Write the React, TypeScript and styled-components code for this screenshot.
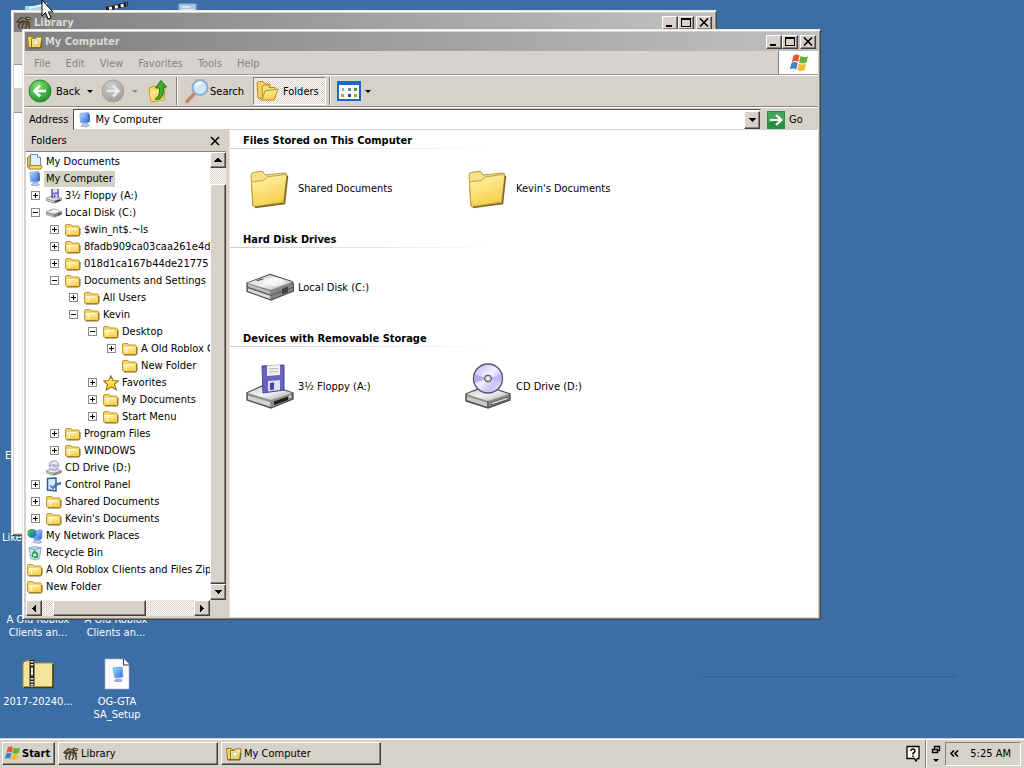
import React from "react";
import styled, { createGlobalStyle, css } from "styled-components";

const face = "#d6d1c9";
const font = '"DejaVu Sans Condensed", "DejaVu Sans", sans-serif';

const GlobalStyle = createGlobalStyle`
  * { box-sizing: border-box; }
  html, body, #root { height: 100%; }
  body {
    margin: 0;
    overflow: hidden;
    background: #3b6ea5;
    color: #000;
    font-family: ${font};
    font-size: 11px;
    line-height: 13px;
  }
  button, input { font: inherit; color: inherit; margin: 0; padding: 0; border: 0; background: none; border-radius: 0; }
  ul, h1, h2 { margin: 0; padding: 0; list-style: none; font-size: inherit; }
  svg { display: block; flex: none; }
`;

const raised = css`
  border: 1px solid;
  border-color: #fff #404040 #404040 #fff;
  box-shadow: inset -1px -1px 0 #85827b;
  background: ${face};
`;

const dither = css`
  background: repeating-conic-gradient(#fff 0 25%, #d6d1c9 0 50%) 0 0 / 2px 2px;
`;

/* ---------- desktop ---------- */

const Screen = styled.div`
  display: flex;
  flex-direction: column;
  height: 100%;
`;

const Desktop = styled.main`
  position: relative;
  flex: 1;
  min-height: 0;
  overflow: hidden;
  background: #3b6ea5;
`;

const Shortcut = styled.button<{ $x: number; $y: number }>`
  position: absolute;
  left: ${(p) => p.$x}px;
  top: ${(p) => p.$y}px;
  width: 78px;
  display: flex;
  flex-direction: column;
  align-items: center;
  gap: 5px;
  color: #fff;
  text-align: center;
  white-space: pre-line;
`;

const Caption = styled.span<{ $x: number; $y: number }>`
  position: absolute;
  left: ${(p) => p.$x}px;
  top: ${(p) => p.$y}px;
  color: #fff;
`;

const Streak = styled.div`
  position: absolute;
  left: 701px;
  right: 68px;
  top: 676px;
  height: 2px;
  background: linear-gradient(#3656c0 50%, #4c6688 50%);
`;

const Pointer = styled.svg`
  position: absolute;
  left: 41px;
  top: 0;
`;

/* ---------- window chrome ---------- */

const Window = styled.section<{ $x: number; $y: number; $right: number; $h?: number }>`
  position: absolute;
  left: ${(p) => p.$x}px;
  top: ${(p) => p.$y}px;
  right: ${(p) => p.$right}px;
  height: ${(p) => (p.$h ? `${p.$h}px` : "auto")};
  display: flex;
  flex-direction: column;
  padding: 2px;
  background: ${face};
  border: 1px solid;
  border-color: #ece9e4 #45464a #45464a #ece9e4;
  box-shadow: inset 1px 1px 0 #fff, inset -1px -1px 0 #8b8881;
`;

const TitleBar = styled.header`
  display: flex;
  align-items: center;
  gap: 2px;
  height: 19px;
  padding: 0 2px;
  background: linear-gradient(90deg, #808080, #a0a0a0 50%, #c0c0c0);
  color: #dcd9d3;
  h1 { flex: 1; font-weight: bold; }
`;

const Caps = styled.div`
  display: flex;
  button:last-child { margin-left: 2px; }
`;

const CapButton = styled.button`
  ${raised}
  width: 16px;
  height: 14px;
  display: grid;
  place-items: center;
  color: #000;
`;

const MenuBar = styled.nav`
  display: flex;
  height: 24px;
  padding-left: 9px;
  background: #d8d2ce;
  border-bottom: 1px solid #9b9791;
  color: #87837e;
`;

const MenuItem = styled.button`
  margin-right: 15px;
  padding-top: 1px;
`;

const Flag = styled.div`
  display: grid;
  place-items: center;
  width: 40px;
  margin-left: auto;
  background: #fff;
  border-left: 1px solid #85827b;
`;

const ToolBar = styled.div`
  display: flex;
  align-items: center;
  height: 32px;
  padding: 1px 0;
  border-top: 1px solid #fff;
  border-bottom: 1px solid #85827b;
`;

const Tool = styled.button<{ $pressed?: boolean; $gap?: number; $end?: number }>`
  display: flex;
  align-items: center;
  gap: ${(p) => p.$gap ?? 4}px;
  height: 28px;
  padding: 0 ${(p) => p.$end ?? 3}px 0 3px;
  ${(p) =>
    p.$pressed &&
    css`
      ${dither}
      padding-left: 2px;
      border: 1px solid;
      border-color: #85827b #fff #fff #85827b;
    `}
`;

const Arrow = styled.span<{ $dim?: boolean }>`
  width: 0;
  height: 0;
  margin: 0 5px 0 4px;
  border: 3px solid transparent;
  border-bottom: 0;
  border-top-color: ${(p) => (p.$dim ? "#8f8b85" : "#000")};
`;

const Rule = styled.span<{ $tight?: boolean }>`
  width: 2px;
  height: 28px;
  margin: 0 ${(p) => (p.$tight ? 1 : 3)}px;
  border-left: 1px solid #85827b;
  border-right: 1px solid #fff;
`;

const AddressBar = styled.form`
  display: flex;
  align-items: center;
  height: 23px;
  padding: 1px 0 0 4px;
  border-top: 1px solid #fff;
`;

const Combo = styled.div`
  flex: 1;
  display: flex;
  align-items: center;
  gap: 2px;
  height: 21px;
  margin: 0 6px 0 5px;
  padding-left: 3px;
  background: #fff;
  border: 1px solid;
  border-color: #55534f #d6d1c9 #d6d1c9 #55534f;
  input { flex: 1; min-width: 0; height: 17px; outline: 0; }
`;

const ComboButton = styled.button`
  ${raised}
  width: 16px;
  height: 18px;
  display: grid;
  place-items: center;
`;

const GoButton = styled.button`
  display: flex;
  align-items: center;
  gap: 4px;
  width: 51px;
`;

const Panes = styled.div`
  display: flex;
  align-items: stretch;
`;

/* ---------- folder tree ---------- */

const Side = styled.aside`
  flex: none;
  width: 205px;
  padding: 0 3px 1px 1px;
  border-right: 1px solid #e9e6e1;
`;

const SideHead = styled.div`
  display: flex;
  align-items: center;
  justify-content: space-between;
  height: 22px;
  padding: 0 6px 0 5px;
  border-bottom: 1px solid #85827b;
`;

const TreeBox = styled.div`
  display: grid;
  grid-template-columns: minmax(0, 1fr) 16px;
  grid-template-rows: auto 16px;
`;

const Tree = styled.ul`
  background: #fff;
  padding: 1px 0 5px;
  overflow: hidden;
`;

const Row = styled.li<{ $depth: number }>`
  display: flex;
  align-items: center;
  height: 17px;
  padding-left: ${(p) => (p.$depth ? (p.$depth - 1) * 19 : 1)}px;
  white-space: nowrap;
`;

const Slot = styled.span`
  flex: none;
  width: 20px;
  padding-left: 5px;
`;

const Toggle = styled.button`
  display: block;
  width: 9px;
  height: 9px;
  border: 1px solid #8b8b8b;
  background: #fff;
`;

const Label = styled.span<{ $selected?: boolean }>`
  margin-left: 1px;
  padding: 1px 2px 2px;
  background: ${(p) => (p.$selected ? "#d3d1c4" : "none")};
`;

const Track = styled.div<{ $horizontal?: boolean }>`
  ${dither}
  display: flex;
  flex-direction: ${(p) => (p.$horizontal ? "row" : "column")};
`;

const ScrollButton = styled.button`
  ${raised}
  width: 16px;
  height: 16px;
  display: grid;
  place-items: center;
`;

const Thumb = styled.div`
  ${raised}
  flex: 1;
  margin-top: 16px;
`;

const HThumb = styled.div`
  ${raised}
  flex: 1;
  margin: 0 48px 0 11px;
`;

/* ---------- content pane ---------- */

const Content = styled.div`
  flex: 1;
  min-width: 0;
  background: #fff;
`;

const Group = styled.section`
  h2 {
    height: 19px;
    padding: 1px 0 0 13px;
    line-height: 19px;
    background: linear-gradient(90deg, #c9ccd2, #fff) 0 100% / 268px 1px no-repeat;
  }
`;

const Tiles = styled.ul`
  display: grid;
  grid-template-columns: repeat(auto-fill, 218px);
  padding: 15px 0 17px 16px;
`;

const Tile = styled.li`
  display: flex;
  align-items: center;
  gap: 4px;
  height: 48px;
`;

/* ---------- background window body ---------- */

const Strip = styled.div<{ $h?: number; $white?: boolean }>`
  flex: ${(p) => (p.$h ? "none" : "1")};
  height: ${(p) => (p.$h ? `${p.$h}px` : "auto")};
  background: ${(p) => (p.$white ? "#fff" : "#d3cdc8")};
  border-top: 1px solid ${(p) => (p.$white ? "#9b9791" : "#d3cdc8")};
`;

/* ---------- taskbar ---------- */

const TaskBar = styled.footer`
  display: flex;
  align-items: center;
  gap: 3px;
  height: 30px;
  padding: 2px 3px 2px 2px;
  background: ${face};
  border-top: 1px solid #d6d1c9;
  box-shadow: inset 0 1px 0 #fff;
`;

const StartButton = styled.button`
  ${raised}
  display: flex;
  align-items: center;
  gap: 1px;
  height: 23px;
  width: 53px;
  padding-left: 1px;
  font-weight: bold;
`;

const Task = styled.button`
  ${raised}
  display: flex;
  align-items: center;
  gap: 2px;
  width: 160px;
  height: 23px;
  padding-left: 4px;
`;

const TaskSpace = styled.div`
  flex: 1;
`;

const Tray = styled.div`
  display: flex;
  align-items: center;
  justify-content: space-between;
  width: 76px;
  height: 24px;
  margin-left: 1px;
  padding: 0 9px 0 4px;
  border: 1px solid;
  border-color: #85827b #fff #fff #85827b;
`;

/* ---------- drawings ---------- */

const HiddenSvg = styled.svg`
  position: absolute;
`;

const Paints = () => (
  <HiddenSvg width="0" height="0" aria-hidden="true">
    <defs>
      <linearGradient id="yellow" x1="0" y1="0" x2="0.4" y2="1">
        <stop offset="0" stopColor="#fff7b0" />
        <stop offset="1" stopColor="#f7cf4c" />
      </linearGradient>
      <linearGradient id="screen" x1="0" y1="0" x2="1" y2="1">
        <stop offset="0" stopColor="#b9dcff" />
        <stop offset="1" stopColor="#2c66d8" />
      </linearGradient>
      <linearGradient id="metal" x1="0" y1="0" x2="1" y2="1">
        <stop offset="0" stopColor="#c6c6c6" />
        <stop offset="0.5" stopColor="#f2f2f2" />
        <stop offset="1" stopColor="#a8a8a8" />
      </linearGradient>
      <radialGradient id="green" cx="0.4" cy="0.3" r="0.7">
        <stop offset="0" stopColor="#8be07a" />
        <stop offset="1" stopColor="#1f9326" />
      </radialGradient>
      <radialGradient id="grey" cx="0.4" cy="0.3" r="0.7">
        <stop offset="0" stopColor="#d0d0d0" />
        <stop offset="1" stopColor="#a09f9d" />
      </radialGradient>
      <linearGradient id="disc" x1="0" y1="0" x2="1" y2="1">
        <stop offset="0" stopColor="#b9b2f2" />
        <stop offset="0.45" stopColor="#f2f0ff" />
        <stop offset="0.7" stopColor="#c9c2f6" />
        <stop offset="1" stopColor="#f6f4ff" />
      </linearGradient>
    </defs>
  </HiddenSvg>
);

const FolderIcon = () => (
  <svg width="16" height="16" viewBox="0 0 16 16">
    <path d="M.5 4Q.5 2.500 2 2.500h3.500Q6.500 2.500 7 4h6q1.500 0 1.500 1.500v6.500q0 1.500-1.500 1.500H2.500Q.5 13.500.5 12z" fill="#f3d465" stroke="#c09a35" />
    <path d="M1.500 6.500h12v5.500q0 1-1 1H2.500q-1 0-1-1z" fill="url(#yellow)" />
    <path d="M2 6.500h9M4.500 6.500V12" stroke="#fffbe0" />
    <path d="M2 14h11.500q1.500 0 1.500-2V6" fill="none" stroke="#86661c" />
  </svg>
);

const BigFolder = () => (
  <svg width="48" height="48" viewBox="0 0 48 48">
    <path d="M5 11q0-2 2-2.500l8-1.300q2 0 3 2l1 1.800 19-2q3 0 3 2.500L38 39 9 43q-2 0-2.300-2z" fill="#f7e085" stroke="#b89a45" />
    <path d="M5.500 19.500q0-1.500 2-2l10-1 3.500-3.500 17.500-2.500q2.500 0 2.200 2.500L37.500 38 9 42.500q-2 0-2-2z" fill="url(#yellow)" stroke="#c2a044" />
    <path d="M41.500 12 38.500 39.500 9 43.500" fill="none" stroke="#7d6428" strokeWidth="1.500" />
  </svg>
);

const ComputerIcon = () => (
  <svg width="16" height="16" viewBox="0 0 16 16">
    <path d="M3 1.500 11.500.5l1 9-2 1.500-7-.5z" fill="url(#screen)" stroke="#8fb2e0" />
    <path d="M10.500 2l2-.5.500 8-1.500 1z" fill="#3d6cc4" />
    <path d="M6 11h4l.5 1.500 2 1-3 1.500-5.500-1 2-1z" fill="#b9cbe6" stroke="#7787c2" strokeWidth=".6" />
  </svg>
);

const DocsIcon = () => (
  <svg width="16" height="16" viewBox="0 0 16 16">
    <path d="M.5 3.500 3 2v12.500L.5 13z" fill="#f2cf55" stroke="#a88222" />
    <path d="M3.500.5h7l3 3v9h-10z" fill="#e4f0fb" stroke="#6b8ab5" />
    <path d="M10.500.5v3h3" fill="#fff" stroke="#6b8ab5" />
    <path d="M2 11.500h12.500l.5 1-1 2.500H2z" fill="#f4d768" stroke="#a88222" />
  </svg>
);

const FloppyDrive = ({ size = 16 }: { size?: number }) => (
  <svg width={size} height={size} viewBox="0 0 48 48">
    <path d="M1 31 20 22l27 9v6L25 46 1 38z" fill="#8f8f8f" stroke="#555" strokeWidth="1.400" />
    <path d="M1.500 31 20 23l26 8-21 7z" fill="url(#metal)" />
    <path d="M2 33.500 24 40v4.500L2 37.500z" fill="#d2d2d2" />
    <path d="M26 39.500 46 32.500v4L26 45z" fill="#8a8a8a" />
    <path d="M28 39.500 42 34.500v3.500L28 43z" fill="#1b1b1b" />
    <circle cx="44" cy="34.500" r="1" fill="#fff" />
    <path d="M16 4 38 3v25L17 31z" fill="#6a62c4" stroke="#47419a" />
    <path d="M21 3.500 34 3v10l-13 1z" fill="#f3f1ee" />
    <path d="M23 7l9-.5M23 10l9-.5" stroke="#b9b6b0" />
    <path d="M22 19l12-1v10l-12 1.500z" fill="#d9e2f4" />
    <path d="M24 21l4-.5v7l-4 .5z" fill="#4a4496" />
  </svg>
);

const DiskDrive = ({ size = 16 }: { size?: number }) => (
  <svg width={size} height={size} viewBox="0 0 48 48">
    <path d="M1 20 24 11.500l22 7q1.500 1 1.500 4v5.500L25 37 1 28.500z" fill="#848484" stroke="#4f4f4f" strokeWidth="1.200" />
    <path d="M1.500 20 24 12l22 7-21 8z" fill="url(#metal)" />
    <path d="M2 25l22 7.500v3.500L2 28z" fill="#dadada" />
    <path d="M2 21l22 7.500v2.500L2 23.500z" fill="#c0c0c0" />
    <path d="M1.500 24.500 25 32.500l22-8" fill="none" stroke="#555" />
    <path d="M10 17.500l6-2 2 .6-6 2z" fill="#444" />
    <path d="M36 26l6-2.500v5.500L36 31.500z" fill="#3d4340" />
    <ellipse cx="28" cy="19" rx="11" ry="4" fill="#fff" opacity=".6" />
  </svg>
);

const CdDrive = ({ size = 16 }: { size?: number }) => (
  <svg width={size} height={size} viewBox="0 0 48 48">
    <path d="M2 32 22 24l24 8v6L24 46 2 39z" fill="#8f8f8f" stroke="#4f4f4f" strokeWidth="1.400" />
    <path d="M2.500 32 22 25l23 7-21 7z" fill="url(#metal)" />
    <path d="M3 34.500l20 6v4L3 38z" fill="#c9c9c9" />
    <path d="M24 39v6.500" stroke="#444" />
    <path d="M27 40.500 44 35v2.500L27 43z" fill="#d9e2d5" stroke="#444" strokeWidth=".8" />
    <circle cx="24" cy="16.500" r="14.500" fill="url(#disc)" stroke="#55556a" strokeWidth="1.400" />
    <path d="M24 16.500 11 12.500a14 14 0 0 0 0 8z" fill="#9f94ee" opacity=".7" />
    <path d="M24 16.500l13-4a14 14 0 0 1 0 7z" fill="#b8aef4" opacity=".7" />
    <circle cx="24" cy="16.500" r="3.500" fill="#b7bcc0" stroke="#555" />
    <circle cx="24" cy="16.500" r="1.400" fill="#fff" />
  </svg>
);

const StarIcon = () => (
  <svg width="16" height="16" viewBox="0 0 16 16">
    <path d="M8 .8l2 4.700 5.200.4-3.800 3.500 2 5.300L8.500 12l-5.300 3L4.500 9.500.8 6l5-.5z" fill="#ffdf3e" stroke="#94731c" strokeWidth="1.100" />
    <path d="M7.500 4l-.8 2.500-2.700.5" fill="none" stroke="#fff6b0" />
  </svg>
);

const ControlIcon = () => (
  <svg width="16" height="16" viewBox="0 0 16 16">
    <path d="M1.500 1.500 10 1v13l-8.500-1z" fill="#d6e8fb" stroke="#2d5a9e" strokeWidth="1.500" />
    <path d="M4 8.500l2.500 1.500L10 6.500l5-1-1 2-3 .5-4 4z" fill="#4c86cf" stroke="#2d5a9e" strokeWidth=".8" />
  </svg>
);

const NetworkIcon = () => (
  <svg width="16" height="16" viewBox="0 0 16 16">
    <path d="M6 2.500 15 2v8l-2 2-6-.5z" fill="url(#screen)" stroke="#86a9dc" />
    <circle cx="5" cy="5.500" r="4.500" fill="#2c80b8" />
    <path d="M2 3q3-2.500 5-1l-1 3-3 .5 1 3-2-.5Q0 5 2 3z" fill="#3bb352" />
    <path d="M8 12h4l3 2-3 1.500-6-1z" fill="#b9cbe6" stroke="#8393b2" strokeWidth=".6" />
  </svg>
);

const RecycleIcon = () => (
  <svg width="16" height="16" viewBox="0 0 16 16">
    <path d="M2 3l5-1.500 7 1-1.500 11-4 1.500-5-1.500z" fill="#c3e2f2" stroke="#93b2c8" />
    <path d="M2 3l6 1.500 6-2" fill="none" stroke="#7ea0b8" />
    <path d="M5.500 9l2-2.500 2.500 2M10.500 8.500l-.5 3.500-3 .5M5 9.500l1 2.500" fill="none" stroke="#219a3a" strokeWidth="1.700" />
  </svg>
);

const OpenFolderIcon = () => (
  <svg width="16" height="16" viewBox="0 0 16 16">
    <path d="M.5 2.500h5l1 1.500h3v9.500h-8z" fill="#f3d566" stroke="#9a7620" />
    <path d="M4.500 4.500h4L9.500 3h5.500l-1.500 10.500h-9z" fill="url(#yellow)" stroke="#9a7620" />
    <path d="M6 7l4-1.500L12 9l-4 2.500z" fill="#eef3ea" stroke="#b5b08a" strokeWidth=".6" />
    <path d="M2 14h12l1-7" fill="none" stroke="#6d5418" />
  </svg>
);

const LibraryIcon = () => (
  <svg width="16" height="16" viewBox="0 0 16 16">
    <path d="M0 6.500 5 2l4 1 2-1.500L15.500 3l-1 2-3 .5 3 2-1.500 1.500-4-1.500L5 8 1.500 8z" fill="#4d402a" />
    <path d="M4.500 8l-2 2.500 1 3M8 8l-2 3 .5 3M10 8l.5 3-1.500 3M12 8.500l1.500 2.500-.5 3" fill="none" stroke="#4d402a" strokeWidth="1.500" />
    <path d="M3 6l4-2 3 1.500M11 3.500l3 .2" fill="none" stroke="#c9b37c" />
  </svg>
);

const WindowsFlag = ({ w = 20, h = 18 }: { w?: number; h?: number }) => (
  <svg width={w} height={h} viewBox="0 0 20 18">
    <path d="M4.500 1.500Q7.500-.5 10.500 1.500L9 8Q6 6 2.800 8z" fill="#e8592f" />
    <path d="M11.500 2Q15 4 19 2.200L17.500 8.500Q13.500 10.500 10 8.500z" fill="#62b236" />
    <path d="M2.500 9Q5.500 7.200 8.700 9L7.200 15.500Q4 13.500.8 15.500z" fill="#3f7fd6" />
    <path d="M9.700 9.500Q13 11.500 17.200 9.500L15.700 16Q12 18 8.200 16z" fill="#f6bd2a" />
  </svg>
);

const RoundArrow = ({ back }: { back?: boolean }) => (
  <svg width="24" height="24" viewBox="0 0 24 24">
    <circle cx="12" cy="12" r="11" fill={back ? "url(#green)" : "url(#grey)"} stroke={back ? "#2a8a2c" : "#a8a6a2"} />
    <path
      d={back ? "M18 12H7M12 6.500 6.500 12l5.500 5.500" : "M6 12h11M12 6.500l5.500 5.500-5.500 5.500"}
      fill="none"
      stroke={back ? "#fff" : "#ecebe9"}
      strokeWidth="2.600"
    />
  </svg>
);

const UpIcon = () => (
  <svg width="24" height="24" viewBox="0 0 24 24">
    <path d="M3 9l6-2 2 2 8-1-1 13-13 2z" fill="#f5dd60" stroke="#bd9a25" />
    <path d="M4 13l14-3v11L5 22.500z" fill="url(#yellow)" />
    <path d="M9 20q5-2 4.500-11H9.500L15 1.500 20.500 8H17.500q1 10-5 12.500z" fill="#3fae2d" stroke="#23791b" />
  </svg>
);

const SearchIcon = () => (
  <svg width="26" height="26" viewBox="0 0 26 26">
    <path d="M10 16 3 23.500" stroke="#c08a66" strokeWidth="3.500" strokeLinecap="round" />
    <circle cx="16" cy="9.500" r="7.500" fill="#cdeafb" stroke="#8fadc9" strokeWidth="2" />
    <path d="M12 8q2-4 6-3" fill="none" stroke="#fff" strokeWidth="2" />
  </svg>
);

const FoldersIcon = () => (
  <svg width="24" height="24" viewBox="0 0 24 24">
    <path d="M1 4l2-1.500h4L9 5h5v14H2z" fill="#f4d25e" stroke="#c08c22" />
    <path d="M6 8l2-2h4l1.500 2.500H19V19H7z" fill="#f8e07c" stroke="#c08c22" />
    <path d="M6 21l3-9 13-2-4 11z" fill="url(#yellow)" stroke="#c08c22" />
    <path d="M2 19l4 3" stroke="#c08c22" />
  </svg>
);

const ViewsIcon = () => (
  <svg width="24" height="20" viewBox="0 0 24 20">
    <rect x="1" y="1" width="22" height="18" fill="#fff" stroke="#1f66cc" strokeWidth="2" />
    <path d="M1 2.500h22" stroke="#1f66cc" strokeWidth="3" />
    <g>
      <path d="M5 7h2v3H5z" fill="#9aa9c0" />
      <path d="M11 7h3v3h-3z" fill="#7387b3" />
      <path d="M17 7h3v3h-3z" fill="#3f9a55" />
      <path d="M4 13h3v3H4z" fill="#e58a4c" />
      <path d="M11 13h3v3h-3z" fill="#27479e" />
      <path d="M17 13h3v3h-3z" fill="#d98c3a" />
    </g>
  </svg>
);

const GoIcon = () => (
  <svg width="18" height="18" viewBox="0 0 18 18">
    <rect width="18" height="18" fill="#2a8f40" />
    <path d="M1 1h16v8Q9 8 1 12z" fill="#57b368" opacity=".6" />
    <path d="M3 9h11M9 4l5.500 5L9 14" fill="none" stroke="#fff" strokeWidth="2.200" />
  </svg>
);

const ZipFolder = () => (
  <svg width="32" height="32" viewBox="0 0 32 32">
    <path d="M1 6q0-3 3-3l6-1 4 3h17v24H1z" fill="#f3e59a" stroke="#9d8b3d" />
    <path d="M31 6v23.500H2" fill="none" stroke="#40391c" strokeWidth="1.500" />
    <path d="M10 2v26" stroke="#222" strokeWidth="5" />
    <path d="M10 3v14M10 20v8" stroke="#e9e6d8" strokeWidth="3" strokeDasharray="1.500 1.500" />
    <rect x="8.500" y="9" width="3" height="9" fill="#e9e6d8" stroke="#222" />
  </svg>
);

const SetupIcon = () => (
  <svg width="32" height="32" viewBox="0 0 32 32">
    <path d="M4 1h19l5 5v25H4z" fill="#fdfdff" stroke="#9fb4d2" strokeWidth=".6" />
    <path d="M22.500 1v6H28" fill="#fff" stroke="#333" />
    <path d="M12 10l9-1 1 10-8 1z" fill="url(#screen)" stroke="#62b8dc" />
    <path d="M13 22q5-3 9 0l-2 2h-6z" fill="#b49ae0" />
  </svg>
);

const Glyph = ({ d, w = 8, h = 8, fill = true }: { d: string; w?: number; h?: number; fill?: boolean }) => (
  <svg width={w} height={h} viewBox={`0 0 ${w} ${h}`} shapeRendering={fill ? "crispEdges" : "auto"}>
    <path d={d} fill={fill ? "#000" : "none"} stroke={fill ? "none" : "#000"} strokeWidth="1.600" />
  </svg>
);

const WindowButtons = () => (
  <Caps>
    <CapButton aria-label="Minimize"><Glyph w={10} h={10} d="M1 7h6v2H1z" /></CapButton>
    <CapButton aria-label="Maximize"><Glyph w={10} h={10} d="M0 0h10v9H0zM1 2v6h8V2z" /></CapButton>
    <CapButton aria-label="Close"><Glyph w={10} h={9} fill={false} d="M1 .5l8 8M9 .5l-8 8" /></CapButton>
  </Caps>
);

/* ---------- data ---------- */

const icons = {
  folder: <FolderIcon />,
  docs: <DocsIcon />,
  computer: <ComputerIcon />,
  floppy: <FloppyDrive />,
  disk: <DiskDrive />,
  cd: <CdDrive />,
  star: <StarIcon />,
  control: <ControlIcon />,
  network: <NetworkIcon />,
  recycle: <RecycleIcon />,
};

type Node = [depth: number, toggle: "+" | "-" | "", icon: keyof typeof icons, label: string];

const nodes: Node[] = [
  [0, "", "docs", "My Documents"],
  [0, "", "computer", "My Computer"],
  [1, "+", "floppy", "3½ Floppy (A:)"],
  [1, "-", "disk", "Local Disk (C:)"],
  [2, "+", "folder", "$win_nt$.~ls"],
  [2, "+", "folder", "8fadb909ca03caa261e4d8"],
  [2, "+", "folder", "018d1ca167b44de21775"],
  [2, "-", "folder", "Documents and Settings"],
  [3, "+", "folder", "All Users"],
  [3, "-", "folder", "Kevin"],
  [4, "-", "folder", "Desktop"],
  [5, "+", "folder", "A Old Roblox C"],
  [5, "", "folder", "New Folder"],
  [4, "+", "star", "Favorites"],
  [4, "+", "folder", "My Documents"],
  [4, "+", "folder", "Start Menu"],
  [2, "+", "folder", "Program Files"],
  [2, "+", "folder", "WINDOWS"],
  [1, "", "cd", "CD Drive (D:)"],
  [1, "+", "control", "Control Panel"],
  [1, "+", "folder", "Shared Documents"],
  [1, "+", "folder", "Kevin's Documents"],
  [0, "", "network", "My Network Places"],
  [0, "", "recycle", "Recycle Bin"],
  [0, "", "folder", "A Old Roblox Clients and Files Zip"],
  [0, "", "folder", "New Folder"],
];

const groups = [
  {
    title: "Files Stored on This Computer",
    items: [
      { icon: <BigFolder />, label: "Shared Documents" },
      { icon: <BigFolder />, label: "Kevin's Documents" },
    ],
  },
  { title: "Hard Disk Drives", items: [{ icon: <DiskDrive size={48} />, label: "Local Disk (C:)" }] },
  {
    title: "Devices with Removable Storage",
    items: [
      { icon: <FloppyDrive size={48} />, label: "3½ Floppy (A:)" },
      { icon: <CdDrive size={48} />, label: "CD Drive (D:)" },
    ],
  },
];

const FolderTree = () => (
  <Side>
    <SideHead>
      <span>Folders</span>
      <button aria-label="Close folders"><Glyph w={10} h={10} fill={false} d="M1 1l8 8M9 1l-8 8" /></button>
    </SideHead>
    <TreeBox>
      <Tree>
        {nodes.map(([depth, toggle, icon, label], i) => (
          <Row key={i} $depth={depth}>
            {depth > 0 && (
              <Slot>
                {toggle && (
                  <Toggle aria-label={`${toggle === "+" ? "Expand" : "Collapse"} ${label}`}>
                    <Glyph w={7} h={7} d={toggle === "+" ? "M1 3h5v1H1zM3 1h1v5H3z" : "M1 3h5v1H1z"} />
                  </Toggle>
                )}
              </Slot>
            )}
            {icons[icon]}
            <Label $selected={i === 1}>{label}</Label>
          </Row>
        ))}
      </Tree>
      <Track>
        <ScrollButton aria-label="Scroll up"><Glyph w={8} h={4} d="M3 0h2v1h1v1h1v1h1v1H0V3h1V2h1V1h1z" /></ScrollButton>
        <Thumb />
        <ScrollButton aria-label="Scroll down"><Glyph w={7} h={4} d="M0 0h7v1H6v1H5v1H4v1H3V3H2V2H1V1H0z" /></ScrollButton>
      </Track>
      <Track $horizontal>
        <ScrollButton aria-label="Scroll left"><Glyph w={4} h={7} d="M4 0v7H3V6H2V5H1V4H0V3h1V2h1V1h1V0z" /></ScrollButton>
        <HThumb />
        <ScrollButton aria-label="Scroll right"><Glyph w={4} h={7} d="M0 0v7h1V6h1V5h1V4h1V3H3V2H2V1H1V0z" /></ScrollButton>
      </Track>
    </TreeBox>
  </Side>
);

export default function App() {
  return (
    <Screen>
      <GlobalStyle />
      <Paints />
      <Desktop>
        <Shortcut $x={0} $y={-18} aria-label="Shortcut">
          <svg width="32" height="32" viewBox="0 0 32 32">
            <path d="M2 24h18l6 2v5H2z" fill="#a9d6f2" />
            <path d="M6 26l18-4" stroke="#e8f6ff" strokeWidth="2" />
          </svg>
        </Shortcut>
        <Shortcut $x={78} $y={-18} aria-label="Shortcut">
          <svg width="32" height="32" viewBox="0 0 32 32">
            <path d="M5 27l22-5" stroke="#1c1c1c" strokeWidth="4" />
            <path d="M8 26.500l18-4" stroke="#fff" strokeWidth="3" strokeDasharray="3 3" />
          </svg>
        </Shortcut>
        <Shortcut $x={149} $y={-18} aria-label="Shortcut">
          <svg width="32" height="32" viewBox="0 0 32 32">
            <path d="M7 22h17v9H7z" fill="#a9c8df" stroke="#8fb3cf" />
            <path d="M10 25h8M10 28h11" stroke="#e8f4fb" strokeWidth="1.500" />
          </svg>
        </Shortcut>
        <Caption $x={5} $y={449}>E</Caption>
        <Caption $x={2} $y={531}>Like</Caption>
        <Shortcut $x={-1} $y={613}>{"A Old Roblox\nClients an..."}</Shortcut>
        <Shortcut $x={77} $y={613}>{"A Old Roblox\nClients an..."}</Shortcut>
        <Shortcut $x={-1} $y={658}>
          <ZipFolder />
          2017-20240...
        </Shortcut>
        <Shortcut $x={78} $y={658}>
          <SetupIcon />
          {"OG-GTA\nSA_Setup"}
        </Shortcut>
        <Streak />

        <Window $x={11} $y={10} $right={307} $h={526}>
          <TitleBar>
            <LibraryIcon />
            <h1>Library</h1>
            <WindowButtons />
          </TitleBar>
          <Strip $h={32} />
          <Strip $h={24} $white />
          <Strip $h={24} />
          <Strip $white />
        </Window>

        <Window $x={22} $y={29} $right={203}>
          <TitleBar>
            <OpenFolderIcon />
            <h1>My Computer</h1>
            <WindowButtons />
          </TitleBar>
          <MenuBar>
            {["File", "Edit", "View", "Favorites", "Tools", "Help"].map((m) => (
              <MenuItem key={m}>{m}</MenuItem>
            ))}
            <Flag><WindowsFlag /></Flag>
          </MenuBar>
          <ToolBar>
            <Tool $gap={4}><RoundArrow back />Back</Tool>
            <Arrow />
            <Tool aria-label="Forward"><RoundArrow /></Tool>
            <Arrow $dim />
            <Tool aria-label="Up"><UpIcon /></Tool>
            <Rule />
            <Tool $gap={0} $end={9}><SearchIcon />Search</Tool>
            <Tool $pressed $gap={3} $end={6}><FoldersIcon />Folders</Tool>
            <Rule />
            <Tool aria-label="Views" $end={0}><ViewsIcon /></Tool>
            <Arrow />
          </ToolBar>
          <AddressBar onSubmit={(e) => e.preventDefault()}>
            <label htmlFor="address">Address</label>
            <Combo>
              <ComputerIcon />
              <input id="address" defaultValue="My Computer" />
              <ComboButton type="button" aria-label="Show addresses"><Glyph w={7} h={4} d="M0 0h7v1H6v1H5v1H4v1H3V3H2V2H1V1H0z" /></ComboButton>
            </Combo>
            <GoButton><GoIcon />Go</GoButton>
          </AddressBar>
          <Panes>
            <FolderTree />
            <Content>
              {groups.map((g) => (
                <Group key={g.title}>
                  <h2>{g.title}</h2>
                  <Tiles>
                    {g.items.map((t) => (
                      <Tile key={t.label}>{t.icon}{t.label}</Tile>
                    ))}
                  </Tiles>
                </Group>
              ))}
            </Content>
          </Panes>
        </Window>

        <Pointer width="13" height="20" viewBox="0 0 13 20">
          <path d="M1 0v16l3.500-3.500L7 19l3-1.200L7.500 12H12z" fill="#fff" stroke="#000" />
        </Pointer>
      </Desktop>

      <TaskBar>
        <StartButton><WindowsFlag w={17} h={15} />Start</StartButton>
        <Task><LibraryIcon />Library</Task>
        <Task><OpenFolderIcon />My Computer</Task>
        <TaskSpace />
        <button aria-label="Help">
          <svg width="16" height="17" viewBox="0 0 16 17">
            <path d="M2 1.500h12v12h-1.500L11 16l-1.500-2.500H2z" fill="#fffff0" stroke="#000" strokeWidth="1.300" />
            <path d="M6 6q0-2 2-2t2 1.800Q10 7.200 8 8.500v1M8 10.500V12" fill="none" stroke="#000" strokeWidth="1.500" />
          </svg>
        </button>
        <Rule $tight />
        <button aria-label="Restore">
          <svg width="10" height="18" viewBox="0 0 10 18">
            <path d="M3.500 4V1.500h5v4H7M1.500 4.500h5v3h-5z" fill="none" stroke="#000" strokeWidth="1.300" />
            <path d="M2 14h6l-3 3z" />
          </svg>
        </button>
        <Tray>
          <button aria-label="Show hidden icons"><Glyph w={9} h={7} fill={false} d="M4 .5l-3 3 3 3M8 .5l-3 3 3 3" /></button>
          <time>5:25 AM</time>
        </Tray>
      </TaskBar>
    </Screen>
  );
}
